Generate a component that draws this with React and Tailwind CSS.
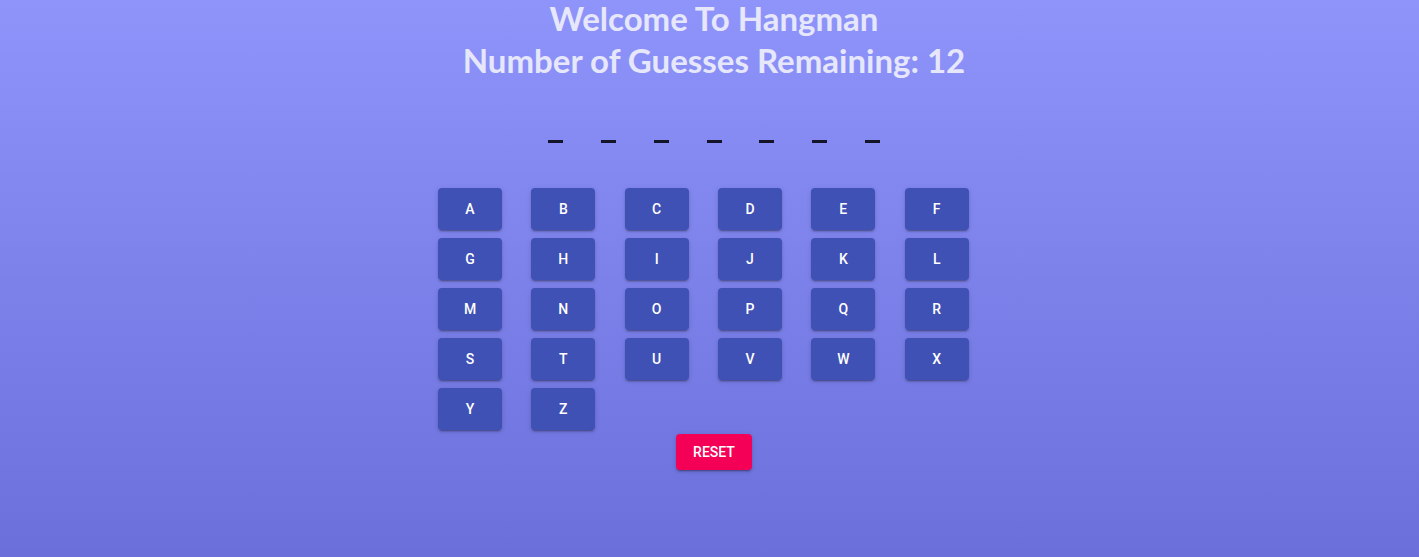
const LETTERS = 'ABCDEFGHIJKLMNOPQRSTUVWXYZ'.split('');

function LetterButton({ letter }) {
  return (
    <div className="pl-1">
      <button className="h-[42px] w-16 rounded bg-[#3f51b5] text-sm font-medium text-white shadow-[0_3px_1px_-2px_rgba(0,0,0,0.2),0_2px_2px_0_rgba(0,0,0,0.14),0_1px_5px_0_rgba(0,0,0,0.12)]">
        {letter}
      </button>
    </div>
  );
}

export default function App() {
  const slots = Array.from({ length: 7 });
  return (
    <div className="h-[557px] w-full bg-[linear-gradient(to_bottom,#8f94fb,#6a6fda)] pl-[9px] font-['Roboto',sans-serif]">
      <div className="flex flex-col items-center">
        {/* title */}
        <h1 className="-mt-[3px] text-center font-['Lato',sans-serif] text-[33px] font-bold leading-[42px] text-[#e6e7fb]">
          Welcome To Hangman
          <br />
          Number of Guesses Remaining: 12
        </h1>

        {/* hidden word — one blank per letter */}
        <div className="mt-[59px] flex">
          {slots.map((_, i) => (
            <span key={i} className="flex w-[52.7px] justify-center">
              <span className="h-[3px] w-[15px] bg-[#15152a]" />
            </span>
          ))}
        </div>

        {/* keyboard */}
        <div className="mt-[45px] grid w-[560px] grid-cols-6 gap-y-2">
          {LETTERS.map((l) => (
            <LetterButton key={l} letter={l} />
          ))}
        </div>

        <button className="mt-1 h-9 w-[76px] rounded bg-[#f50057] text-sm font-medium text-white shadow-[0_3px_1px_-2px_rgba(0,0,0,0.2),0_2px_2px_0_rgba(0,0,0,0.14),0_1px_5px_0_rgba(0,0,0,0.12)]">
          RESET
        </button>
      </div>
    </div>
  );
}
